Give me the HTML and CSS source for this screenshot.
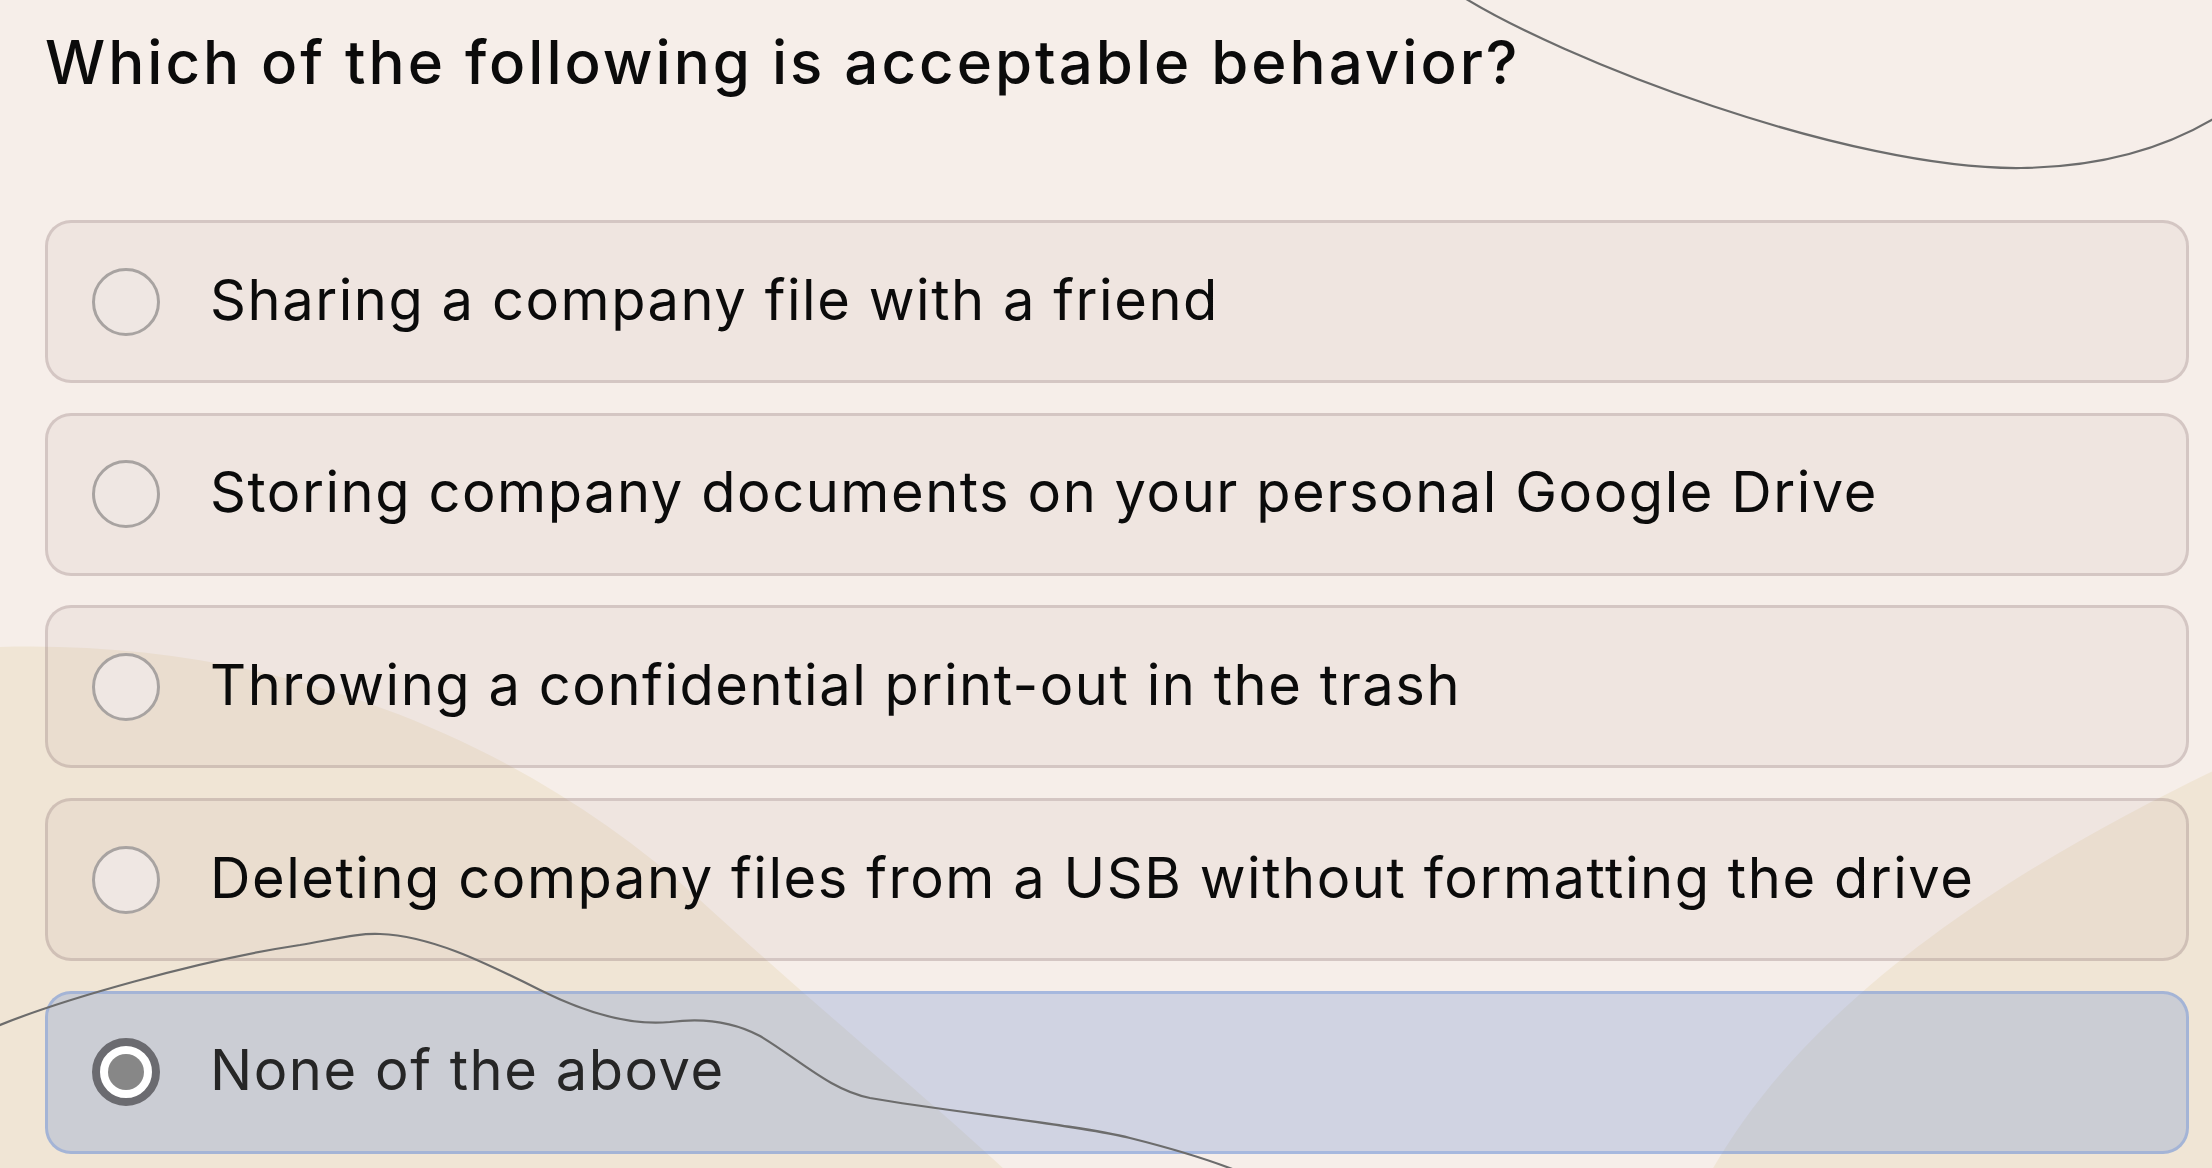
FILE: index.html
```html
<!DOCTYPE html>
<html lang="en">
<head>
  <meta charset="UTF-8">
  <meta name="viewport" content="width=device-width, initial-scale=1.0">
  <title>Quiz - Question</title>
  <link rel="stylesheet" href="styles.css">
</head>
<body>
  <!-- background shapes -->
  <svg class="deco deco-back" viewBox="0 0 2212 1168" width="2212" height="1168" aria-hidden="true">
    <path d="M0 647 C 250 640, 500 720, 700 900 C 820 1010, 930 1100, 1005 1170 L 0 1170 Z" fill="#f0e5d5"/>
    <path d="M2215 770 C 2050 850, 1820 980, 1712 1170 L 2215 1170 Z" fill="#f0e5d5"/>
  </svg>

  <div class="quiz">
    <h1 class="question">Which of the following is acceptable behavior?</h1>

    <div class="options">
      <label class="option">
        <span class="radio"></span>
        <span class="option-text">Sharing a company file with a friend</span>
      </label>
      <label class="option">
        <span class="radio"></span>
        <span class="option-text">Storing company documents on your personal Google Drive</span>
      </label>
      <label class="option">
        <span class="radio"></span>
        <span class="option-text">Throwing a confidential print-out in the trash</span>
      </label>
      <label class="option">
        <span class="radio"></span>
        <span class="option-text">Deleting company files from a USB without formatting the drive</span>
      </label>
      <label class="option selected">
        <span class="radio"></span>
        <span class="option-text">None of the above</span>
      </label>
    </div>
  </div>

  <!-- thin lines drawn over everything -->
  <svg class="deco deco-front" viewBox="0 0 2212 1168" width="2212" height="1168" aria-hidden="true">
    <path d="M 1455 -8 C 1560 60, 1850 170, 2021 168 C 2110 167, 2170 145, 2215 118" />
    <path d="M -5 1027 C 60 1000, 200 960, 300 945 C 340 938, 360 933, 380 934 C 430 936, 480 960, 540 990 C 600 1020, 640 1025, 670 1022 C 700 1018, 730 1020, 760 1036 C 800 1060, 830 1090, 870 1098 C 950 1112, 1080 1125, 1130 1138 C 1170 1148, 1210 1160, 1240 1172" />
  </svg>
</body>
</html>
```

FILE: styles.css
```css
:root {
  --page-bg: #f6eee9;
  --text: #0b0b0b;
  --card-bg: rgba(190, 170, 170, 0.13);
  --card-border: rgba(140, 120, 120, 0.28);
  --selected-bg: rgba(119, 148, 213, 0.3);
  --selected-border: rgba(110, 145, 215, 0.42);
  --radio-ring: #a8a3a1;
}

body {
  margin: 0;
  padding: 0;
  width: 2212px;
  height: 1168px;
  overflow: hidden;
  position: relative;
  background-color: var(--page-bg);
  font-family: 'Inter', 'Liberation Sans', sans-serif;
  color: var(--text);
}

.deco {
  position: absolute;
  top: 0;
  left: 0;
  pointer-events: none;
}

.deco-back {
  z-index: 0;
}

.deco-front {
  z-index: 2;
}

.deco-front path {
  fill: none;
  stroke: #6c6c6c;
  stroke-width: 2.2;
}

.quiz {
  position: relative;
  z-index: 1;
  padding: 26px 23px 0 45px;
}

.question {
  margin: 0;
  font-size: 60px;
  line-height: 72px;
  font-weight: 550;
  letter-spacing: 3px;
}

.options {
  display: flex;
  flex-direction: column;
  gap: 29.7px;
  margin-top: 122px;
}

.option {
  display: flex;
  align-items: center;
  gap: 50px;
  height: 163px;
  box-sizing: border-box;
  padding-left: 44px;
  background-color: var(--card-bg);
  border: 3px solid var(--card-border);
  border-radius: 26px;
  cursor: pointer;
}

.radio {
  flex: none;
  width: 68px;
  height: 68px;
  box-sizing: border-box;
  border-radius: 50%;
  border: 3px solid var(--radio-ring);
  background-color: #efe7e3;
  position: relative;
}

.option-text {
  font-size: 56px;
  letter-spacing: 1.55px;
  white-space: nowrap;
  margin-bottom: 4px;
}

.option.selected {
  background-color: var(--selected-bg);
  border-color: var(--selected-border);
}

.option.selected .radio {
  border: 8px solid #6b6b70;
  background-color: #ffffff;
}

.option.selected .radio::after {
  content: '';
  position: absolute;
  top: 8px;
  left: 8px;
  width: 36px;
  height: 36px;
  border-radius: 50%;
  background-color: #878787;
}

.option.selected .option-text {
  color: #262626;
}
```
